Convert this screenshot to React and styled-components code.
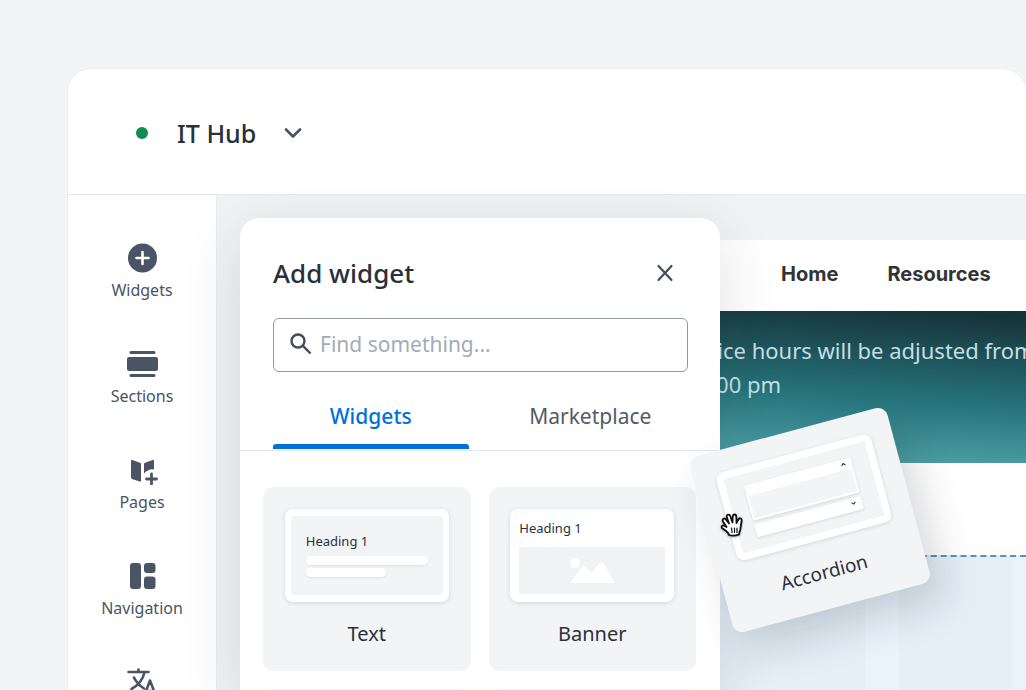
import React from "react"
import styled, { createGlobalStyle, css } from "styled-components"

const GlobalStyle = createGlobalStyle`
*{
    box-sizing:border-box;
}
html, body, #root{
    height:100%;
}
body{
    margin:0;
    overflow:hidden;
    background-color:#f3f4f6;
    color:#2a303b;
    font-family:"Noto Sans", sans-serif;
}
button, input{
    font-family:inherit;
}
button{
    border:none;
    background:none;
    padding:0;
    color:inherit;
    cursor:pointer;
}
h1, h2, p{
    margin:0;
}
`

const Page = styled.div`
height:100%;
padding:68px 0 0 67px;
`
const Window = styled.div`
height:100%;
display:flex;
flex-direction:column;
overflow:hidden;
background-color:white;
border:1px solid #eceef0;
border-width:1px 0 0 1px;
border-radius:24px 24px 0 0;
`
const Header = styled.header`
flex:none;
height:126px;
display:flex;
align-items:center;
padding:2px 68px 0;
border-bottom:1px solid #e8eaec;
`
const Status = styled.span`
width:12px;
height:12px;
border-radius:50%;
background-color:#118b4f;
`
const SiteButton = styled.button`
display:flex;
align-items:center;
gap:28px;
margin-left:29px;
font-size:25px;
font-weight:500;
line-height:32px;
`
const Body = styled.div`
flex:1;
min-height:0;
display:flex;
`
const Sidebar = styled.nav`
flex:none;
width:149px;
display:flex;
flex-direction:column;
align-items:center;
gap:46px;
padding-top:48px;
border-right:1px solid #eaecee;
`
const SideButton = styled.button`
flex:none;
height:60px;
display:flex;
flex-direction:column;
align-items:center;
gap:5px;
color:#4a5465;
font-size:16px;
line-height:24px;
`
const Canvas = styled.main`
position:relative;
flex:1;
min-width:0;
display:flex;
padding:45px 0 0 436px;
background-color:#f1f2f4;
`
const Site = styled.div`
flex:1;
min-width:0;
display:flex;
flex-direction:column;
background-color:white;
`
const SiteNav = styled.nav`
flex:none;
height:71px;
display:flex;
align-items:center;
gap:49px;
padding:0 32px 4px 128px;
a{
    color:#323334;
    font-family:Inter, sans-serif;
    font-size:20px;
    font-weight:700;
    text-decoration:none;
}
`
const Notice = styled.p`
flex:none;
height:152px;
padding:22px 0 0 32px;
background:linear-gradient(184deg, #17333a 4%, #26747b 55%, #58abb1 100%);
color:#c4dfe4;
font-size:22px;
line-height:34px;
white-space:nowrap;
`
const DropZone = styled.div`
flex:1;
margin-top:92px;
border-top:2px dashed #4f93c8;
background:repeating-linear-gradient(to right, #e4eff8 0 112px, #e8f3fc 112px 146px) 100px 0;
`
const Panel = styled.section`
position:absolute;
z-index:1;
top:23px;
bottom:0;
left:23px;
width:480px;
display:flex;
flex-direction:column;
overflow:hidden;
background-color:white;
border-radius:20px 20px 0 0;
`
const PanelShadow = styled(Panel)`
z-index:0;
overflow:visible;
box-shadow:0 16px 60px rgba(30,32,36,0.13);
`
const PanelHead = styled.div`
display:flex;
align-items:center;
justify-content:space-between;
padding:35px 45px 25px 33px;
h2{
    font-size:26px;
    font-weight:500;
    line-height:40px;
}
button{
    display:flex;
    color:#454d5a;
}
`
const Search = styled.label`
flex:none;
height:54px;
display:flex;
align-items:center;
gap:8px;
margin:0 32px 0 33px;
padding:0 16px 2px;
border:1px solid #8f98a5;
border-radius:6px;
color:#454b57;
input{
    flex:1;
    min-width:0;
    border:none;
    outline:none;
    padding:0;
    background:none;
    font-size:21px;
    &::placeholder{
        color:#a3abb8;
    }
}
`
const Tabs = styled.div`
flex:none;
display:flex;
gap:24px;
padding:16px 32px 0 33px;
border-bottom:1px solid #e7eaed;
`
const Tab = styled.button`
flex:1;
height:62px;
padding-bottom:6px;
color:#535a66;
font-size:21px;
line-height:30px;
position:relative;
${props => props.$active && css`
color:#0071d9;
font-weight:500;
&::after{
    content:"";
    position:absolute;
    left:0;
    right:0;
    bottom:1px;
    height:5px;
    border-radius:3px 3px 0 0;
    background-color:#0071d9;
}
`}
`
const Cards = styled.div`
display:grid;
grid-template-columns:1fr 1fr;
gap:18px;
padding:36px 24px 0 23px;
`
const Card = styled.button`
height:184px;
display:flex;
flex-direction:column;
align-items:center;
padding-top:22px;
gap:16px;
border-radius:10px;
background-color:#f3f4f6;
font-size:20px;
line-height:32px;
`
const Preview = styled.span`
flex:none;
width:164px;
height:93px;
display:flex;
flex-direction:column;
border-radius:8px;
background-color:white;
box-shadow:0 1px 4px rgba(120,150,175,0.3);
font-size:13px;
line-height:20px;
text-align:left;
`
const TextBox = styled.span`
flex:1;
display:flex;
flex-direction:column;
gap:3px;
margin:7px 6px;
padding:15px;
background-color:#f3f4f6;
border-radius:2px;
`
const TextLine = styled.span`
width:${props => props.$width};
height:9px;
border-radius:5px;
background-color:white;
box-shadow:0 1px 2px rgba(120,150,175,0.2);
&:first-of-type{
    margin-top:2px;
}
`
const BannerTitle = styled.span`
padding:9px;
`
const BannerImage = styled.span`
flex:1;
display:flex;
justify-content:center;
align-items:center;
margin:0 9px 8px;
background-color:#f1f2f4;
`
const DraggedCard = styled(Card)`
position:absolute;
z-index:2;
top:234px;
left:491px;
width:204px;
height:182px;
transform:rotate(-15deg);
box-shadow:10px 20px 40px rgba(30,34,42,0.18);
font-size:19px;
cursor:grab;
${Preview}{
    width:160px;
    height:91px;
}
`
const AccordionBox = styled.span`
flex:1;
display:flex;
flex-direction:column;
align-items:center;
gap:4px;
margin:7px;
padding:12px 0;
background-color:#f3f4f6;
`
const AccordionItem = styled.span`
width:110px;
height:${props => props.$open ? "36px" : "13px"};
border:2px solid white;
border-top-width:11px;
border-radius:2px;
box-shadow:0 1px 3px rgba(120,150,175,0.3);
display:flex;
justify-content:flex-end;
svg{
    flex:none;
    margin:-10px 4px 0 0;
}
`
const Hand = styled.svg`
position:absolute;
z-index:3;
top:317px;
left:503px;
filter:drop-shadow(0 1px 1px rgba(0,0,0,0.3));
`

const SIDE_ITEMS = [
    {
        name: "Widgets",
        icon: <>
            <circle cx="16.5" cy="15" r="14.5"/>
            <path d="M16.5 9v12M10.5 15h12" stroke="white" strokeWidth="2.6" strokeLinecap="round"/>
        </>
    },
    {
        name: "Sections",
        icon: <>
            <rect x="3.5" y="2" width="26" height="3" rx="1.5"/>
            <rect x="1" y="8" width="31" height="14" rx="2"/>
            <rect x="3.5" y="25" width="26" height="3" rx="1.5"/>
        </>
    },
    {
        name: "Pages",
        icon: <>
            <path d="M5 6Q5 4.600 6.300 5.100l7.700 2.600Q15 8 15 9v16.500Q15 27 13.700 26.500L6 23.900Q5 23.500 5 22.500Z"/>
            <path d="M18 9Q18 8 19 7.700l7.700-2.600Q28 4.600 28 6v8.600Q25 13.500 22 15.500 19.500 16.500 18 18.500Z"/>
            <path d="M25.500 19v10M20.500 24h10" fill="none" stroke="currentColor" strokeWidth="2.800" strokeLinecap="round"/>
        </>
    },
    {
        name: "Navigation",
        icon: <>
            <rect x="4" y="2" width="11" height="26" rx="3"/>
            <rect x="18" y="2" width="11.500" height="10" rx="3"/>
            <rect x="18" y="15.500" width="11.500" height="12.500" rx="3"/>
        </>
    },
    {
        name: "Languages",
        iconOnly: true,
        icon: <g fill="none" stroke="currentColor" strokeWidth="2.6" strokeLinecap="round" strokeLinejoin="round">
            <path d="M2.500 5h20M12.500 2.500V5M5.500 22Q16 16 18.500 5.500M8 10.500Q11 17 18 21.500"/>
            <path d="M18.500 28l5.500-14.500L29.500 28M20.500 24h7"/>
        </g>
    }
]

function SideItem({ name, icon, iconOnly }){
    return(
        <SideButton aria-label={name}>
            <svg width="33" height="30" viewBox="0 0 33 30" fill="currentColor">{icon}</svg>
            {!iconOnly && name}
        </SideButton>
    )
}

function Chevron({ up }){
    return(
        <svg width="5" height="8" viewBox="0 0 5 8" fill="none" stroke="#252b37">
            <path d={up ? "M0.500 5 2.500 3 4.500 5" : "M0.500 3 2.500 5 4.500 3"}/>
        </svg>
    )
}

export default function App(){
    return(
        <>
        <GlobalStyle/>
        <Page>
        <Window>
            <Header>
                <Status/>
                <SiteButton>
                    IT Hub
                    <svg width="18" height="12" viewBox="0 0 18 12" fill="none" stroke="#4a5263" strokeWidth="2.600" strokeLinecap="round" strokeLinejoin="round">
                        <path d="M2 2.500 9 9.500l7-7"/>
                    </svg>
                </SiteButton>
            </Header>
            <Body>
                <Sidebar>
                    {SIDE_ITEMS.map(item => <SideItem key={item.name} {...item}/>)}
                </Sidebar>
                <Canvas>
                    <Site>
                        <SiteNav>
                            <a href="#home">Home</a>
                            <a href="#resources">Resources</a>
                        </SiteNav>
                        <Notice>
                            Office hours will be adjusted from<br/>
                            10:00 pm
                        </Notice>
                        <DropZone/>
                    </Site>
                    <PanelShadow as="div"/>
                    <Panel>
                        <PanelHead>
                            <h2>Add widget</h2>
                            <button aria-label="Close">
                                <svg width="20" height="20" viewBox="0 0 20 20" stroke="currentColor" strokeWidth="2.200" strokeLinecap="round">
                                    <path d="M3.500 3l13 14M16.500 3l-13 14"/>
                                </svg>
                            </button>
                        </PanelHead>
                        <Search>
                            <svg width="22" height="22" viewBox="0 0 22 22" fill="none" stroke="currentColor" strokeWidth="2.400">
                                <circle cx="8" cy="8" r="6.500"/>
                                <path d="M12.700 12.700 20.500 20.500"/>
                            </svg>
                            <input type="text" placeholder="Find something..." aria-label="Find something"/>
                        </Search>
                        <Tabs>
                            <Tab $active>Widgets</Tab>
                            <Tab>Marketplace</Tab>
                        </Tabs>
                        <Cards>
                            <Card>
                                <Preview>
                                    <TextBox>
                                        Heading 1
                                        <TextLine $width="122px"/>
                                        <TextLine $width="80px"/>
                                    </TextBox>
                                </Preview>
                                Text
                            </Card>
                            <Card>
                                <Preview>
                                    <BannerTitle>Heading 1</BannerTitle>
                                    <BannerImage>
                                        <svg width="46" height="30" viewBox="0 0 46 30" fill="white">
                                            <circle cx="6" cy="7" r="5"/>
                                            <path d="M1 27 13 11Q15 9 17 11l5 6 9-10Q33 5 35 8l11 19Z"/>
                                        </svg>
                                    </BannerImage>
                                </Preview>
                                Banner
                            </Card>
                            <Card aria-hidden="true"/>
                            <Card aria-hidden="true"/>
                        </Cards>
                    </Panel>
                    <DraggedCard>
                        <Preview>
                            <AccordionBox>
                                <AccordionItem $open><Chevron up/></AccordionItem>
                                <AccordionItem><Chevron/></AccordionItem>
                            </AccordionBox>
                        </Preview>
                        Accordion
                    </DraggedCard>
                    <Hand width="24" height="26" viewBox="0 0 24 26" fill="white" stroke="#111" strokeWidth="1.800" strokeLinejoin="round" strokeLinecap="round">
                        <path d="M9 23Q8.500 20.500 5.500 18.500L2 16Q1 14.500 2.300 13.700 4 13 6.500 15L3 9.500Q2 7.500 3.500 6.700 5 6 6.300 8L9 11.500 6.800 5Q6.500 3 8 2.600 9.700 2.300 10.300 4.200L12.500 10.500 12.800 4.200Q13.200 2.300 14.700 2.500 16.300 2.600 16.300 4.800L16.500 11 18.500 7.300Q19.500 5.800 20.800 6.500 22 7.200 21.600 9L20.500 16Q20.500 18 19.500 20L19 22.500Q14 24.500 9 23Z"/>
                        <path d="M12 20.500 11.500 16M14.500 20.500V16M17 20.500V16" strokeWidth="1.200"/>
                    </Hand>
                </Canvas>
            </Body>
        </Window>
        </Page>
        </>
    )
}
